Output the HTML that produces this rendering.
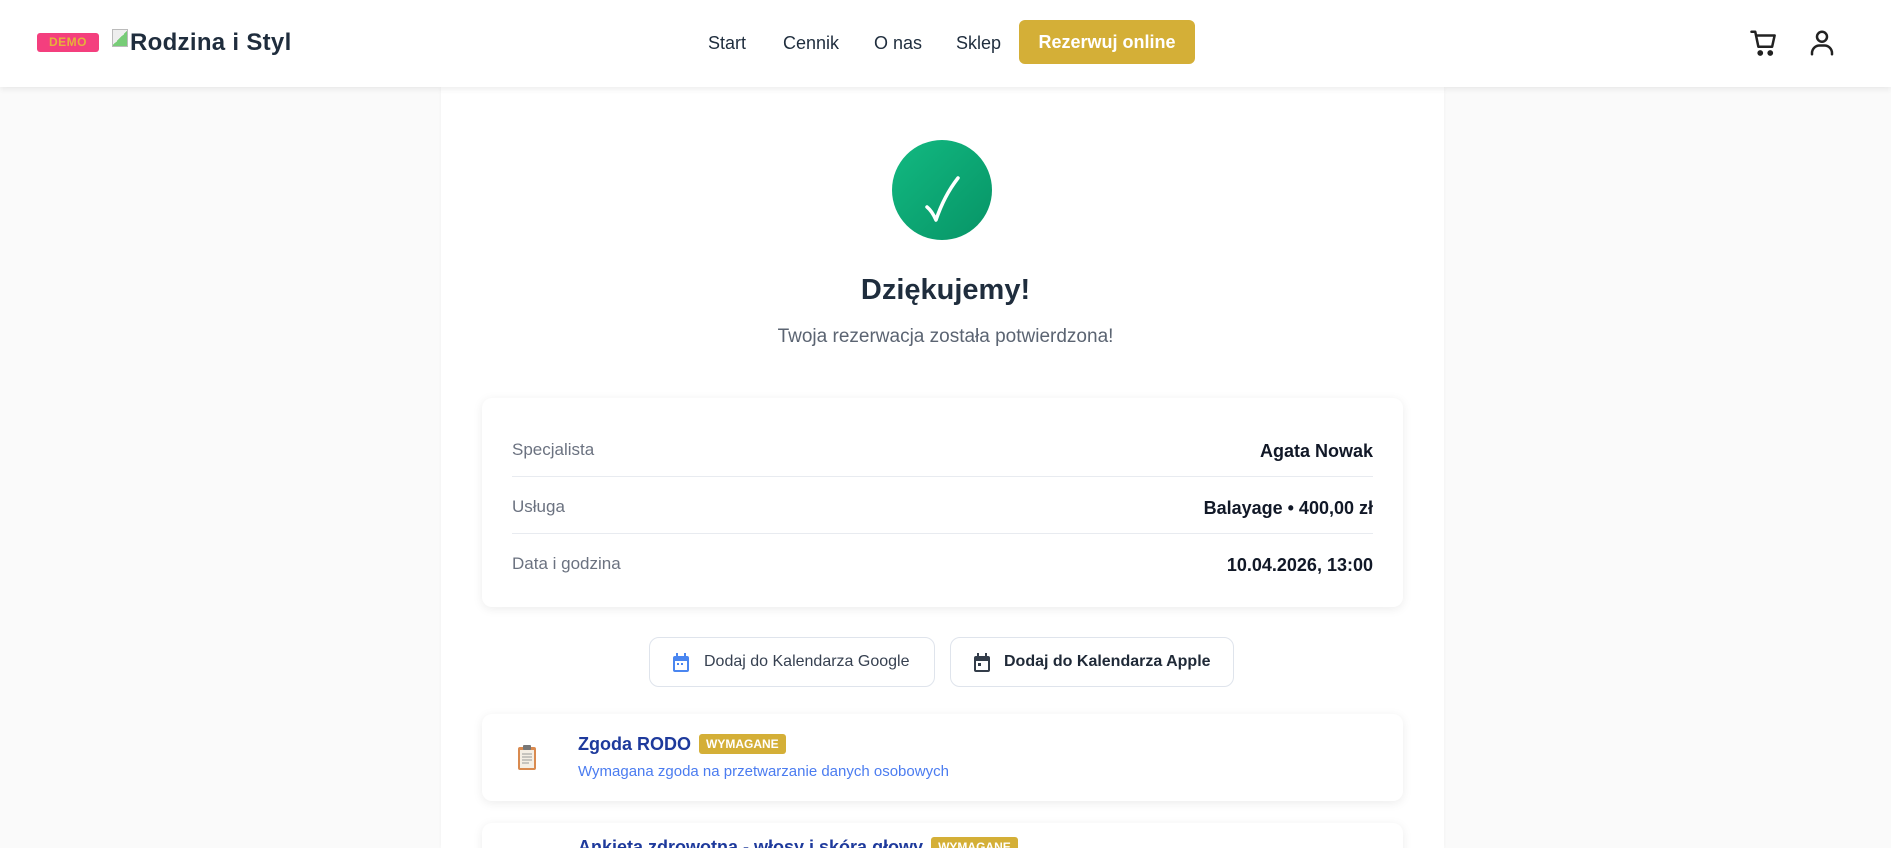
<!DOCTYPE html>
<html><head><meta charset="utf-8">
<style>
*{box-sizing:border-box;margin:0;padding:0}
html,body{width:1891px;height:848px;overflow:hidden}
body{background:#fafafa;font-family:"Liberation Sans",sans-serif;color:#1f2937;position:relative}
.hdr{position:absolute;left:0;top:0;width:1891px;height:87px;background:#fff;box-shadow:0 2px 6px rgba(0,0,0,.08);z-index:5}
.demo{position:absolute;left:37px;top:33px;width:62px;height:19px;background:#f43f7e;border-radius:3px;color:#e6b23a;font-size:12px;font-weight:bold;text-align:center;line-height:19px;letter-spacing:.5px}
.logo{position:absolute;left:112px;top:29px;font-size:24px;font-weight:bold;color:#1f2d3d;letter-spacing:.3px}
.logo i{display:inline-block;width:16px;height:18px;border:1px solid #bbb;vertical-align:top;margin-right:2px;background:linear-gradient(135deg,#eee 50%,#7c7 50%)}
.nav{position:absolute;top:33px;font-size:18px;color:#1f2d3d}
.btn{position:absolute;left:1019px;top:20px;width:176px;height:44px;background:#d4af37;border-radius:6px;color:#fff;font-size:18px;font-weight:bold;text-align:center;line-height:44px}
.main{position:absolute;left:441px;top:87px;width:1003px;height:761px;background:#fff;box-shadow:0 0 4px rgba(0,0,0,.04)}
.circ{position:absolute;left:892px;top:140px;width:100px;height:100px;border-radius:50%;background:linear-gradient(135deg,#12b981,#079466)}
h1{position:absolute;left:0;width:1891px;top:274px;text-align:center;font-size:29px;font-weight:bold;color:#1f2d3d}
.sub{position:absolute;left:0;width:1891px;top:326px;text-align:center;font-size:19px;color:#5b6472}
.card{position:absolute;left:482px;width:921px;background:#fff;border-radius:10px;box-shadow:0 2px 10px rgba(0,0,0,.08)}
.row{position:absolute;left:30px;right:30px;height:57px;border-bottom:1px solid #e8ebf0}
.row span{position:absolute;top:20px;font-size:17px;color:#6b7280}
.row b{position:absolute;right:0;top:21px;font-size:18px;color:#111827}
.cb{position:absolute;top:637px;height:50px;border:1px solid #dfe4ec;border-radius:10px;background:#fff;font-size:16px;color:#374151;line-height:48px}
.cb svg{position:absolute;left:22px;top:15px}
.tt{position:absolute;left:96px;font-size:18px;font-weight:bold;color:#1e3a9c}
.tag{display:inline-block;background:#d4af37;color:#fff;font-size:12px;font-weight:bold;padding:3px 7px;border-radius:3px;vertical-align:2px;margin-left:8px}
.ds{position:absolute;left:96px;top:49px;font-size:15px;color:#4b7cf0}
</style></head><body>
<div class="hdr">
<div class="demo">DEMO</div>
<div class="logo"><i></i>Rodzina i Styl</div>
<div class="nav" style="left:708px">Start</div>
<div class="nav" style="left:783px">Cennik</div>
<div class="nav" style="left:874px">O nas</div>
<div class="nav" style="left:956px">Sklep</div>
<div class="btn">Rezerwuj online</div>
<svg style="position:absolute;left:1749px;top:28px" width="30" height="30" viewBox="0 0 24 24" fill="none" stroke="#222" stroke-width="2" stroke-linecap="round" stroke-linejoin="round"><path d="M2 3h3l2.5 12h11l2-9H6"/><circle cx="9" cy="20" r="1.3" fill="#222"/><circle cx="17" cy="20" r="1.3" fill="#222"/></svg>
<svg style="position:absolute;left:1807px;top:28px" width="30" height="30" viewBox="0 0 24 24" fill="none" stroke="#222" stroke-width="2" stroke-linecap="round"><circle cx="12" cy="7" r="4"/><path d="M4 21v-1a6 6 0 0 1 6-6h4a6 6 0 0 1 6 6v1"/></svg>
</div>
<div class="main"></div>
<div class="circ"><svg width="100" height="100" viewBox="0 0 100 100"><path d="M35 67 Q40 71 44 80 Q52 56 66 38" fill="none" stroke="#fff" stroke-width="3.5" stroke-linecap="round" stroke-linejoin="round"/></svg></div>
<h1>Dziękujemy!</h1>
<div class="sub">Twoja rezerwacja została potwierdzona!</div>
<div class="card" style="top:398px;height:209px">
<div class="row" style="top:22px"><span>Specjalista</span><b>Agata Nowak</b></div>
<div class="row" style="top:79px"><span>Usługa</span><b>Balayage • 400,00 zł</b></div>
<div class="row" style="top:136px;border:none"><span>Data i godzina</span><b>10.04.2026, 13:00</b></div>
</div>
<div class="cb" style="left:649px;width:286px;padding-left:54px"><svg width="18" height="20" viewBox="0 0 18 20"><rect x="1" y="3" width="16" height="16" rx="2" fill="#4a86f0"/><rect x="3" y="8" width="12" height="9" fill="#fff"/><rect x="4" y="0" width="2" height="5" fill="#4a86f0"/><rect x="12" y="0" width="2" height="5" fill="#4a86f0"/><rect x="5" y="10" width="2" height="2" fill="#4a86f0"/><rect x="9" y="10" width="2" height="2" fill="#4a86f0"/></svg>Dodaj do Kalendarza Google</div>
<div class="cb" style="left:950px;width:284px;padding-left:53px;font-weight:bold;color:#1f2937"><svg width="18" height="20" viewBox="0 0 18 20"><rect x="1" y="3" width="16" height="16" rx="2" fill="#333d4a"/><rect x="3" y="8" width="12" height="9" fill="#fff"/><rect x="4" y="0" width="2" height="5" fill="#333d4a"/><rect x="12" y="0" width="2" height="5" fill="#333d4a"/><rect x="5" y="10" width="3" height="3" fill="#333d4a"/></svg>Dodaj do Kalendarza Apple</div>
<div class="card" style="top:714px;height:87px">
<svg style="position:absolute;left:35px;top:30px" width="20" height="27" viewBox="0 0 20 27"><rect x="1" y="3" width="18" height="23" rx="2" fill="#d98a4f"/><rect x="3" y="6" width="14" height="18" fill="#f4eee4"/><rect x="6" y="1" width="8" height="5" rx="1" fill="#777"/><path d="M5 10h10M5 13h10M5 16h10M5 19h7" stroke="#999" stroke-width="1"/></svg>
<div class="tt" style="top:20px">Zgoda RODO<span class="tag">WYMAGANE</span></div>
<div class="ds">Wymagana zgoda na przetwarzanie danych osobowych</div>
</div>
<div class="card" style="top:823px;height:40px">
<div class="tt" style="top:14px">Ankieta zdrowotna - włosy i skóra głowy<span class="tag">WYMAGANE</span></div>
</div>
</body></html>
